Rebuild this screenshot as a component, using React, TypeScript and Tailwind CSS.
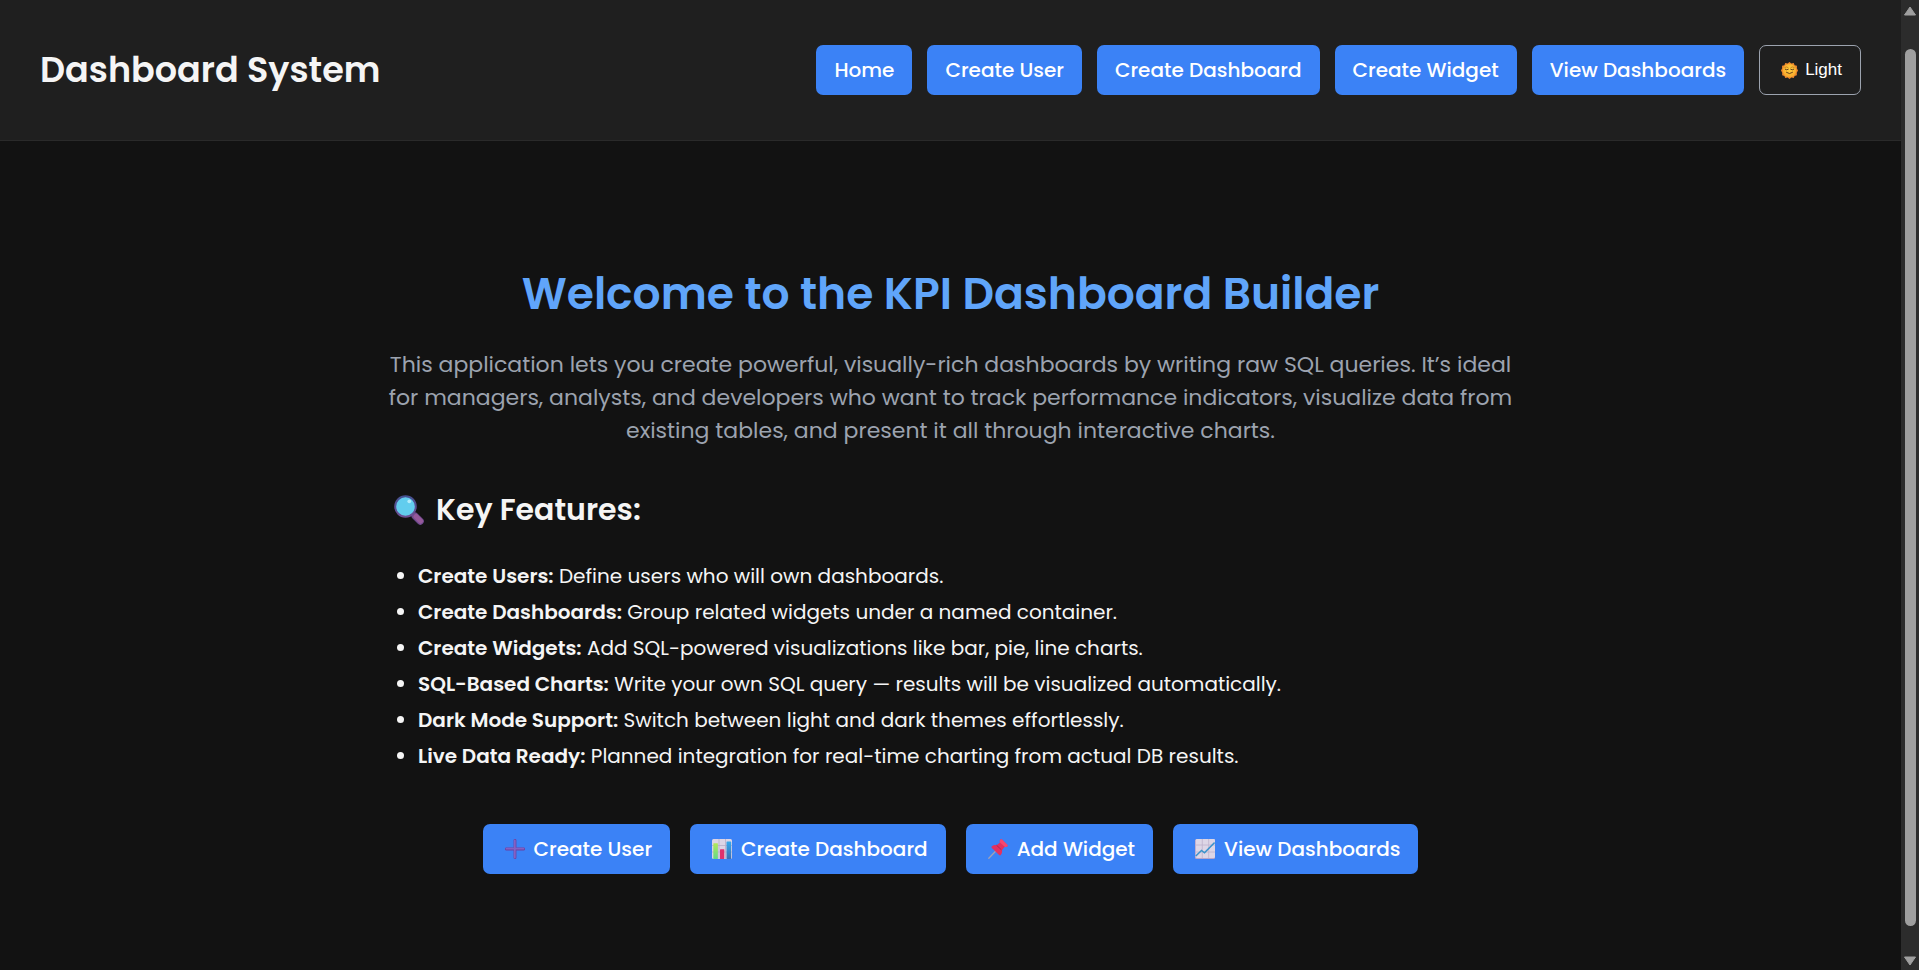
import type { ReactNode } from "react";

function SunFace() {
  return (
    <svg viewBox="0 0 36 36" className="size-[17px] shrink-0" aria-hidden="true">
      <defs>
        <radialGradient id="sun" cx="50%" cy="40%" r="60%">
          <stop offset="0" stopColor="#ffd040" />
          <stop offset="1" stopColor="#f8a82a" />
        </radialGradient>
      </defs>
      <path
        d="M18 0l4 3.4 5-1.4 1.8 4.8 5 1.4-.2 5.1L36 18l-2.6 4.5.2 5.3-4.8 1.6L27 34l-5-1.2L18 36l-4-3.2L9 34l-1.800-4.600-4.800-1.600.2-5.300L0 18l2.400-4.700-.2-5.100 5-1.400L9 2l5 1.400z"
        fill="#ef8a2c"
      />
      <circle cx="18" cy="18" r="14" fill="url(#sun)" />
      <path d="M8 11.500q3.500-2.500 7 0M21 11.500q3.500-2.500 7 0" stroke="#b8741a" strokeWidth="1.600" fill="none" strokeLinecap="round" />
      <path d="M9 15.500q3 2.500 6.500 0M20.500 15.500q3.500 2.500 6.500 0M11.500 22q6.500 5.500 13 0" stroke="#5b3a1d" strokeWidth="2" fill="none" strokeLinecap="round" />
    </svg>
  );
}

function Magnifier() {
  return (
    <svg viewBox="0 0 30 30" className="size-[30px] shrink-0" aria-hidden="true">
      <defs>
        <linearGradient id="rim" x1="0" y1="0" x2="0" y2="1">
          <stop offset="0" stopColor="#44508f" />
          <stop offset="1" stopColor="#6d4f93" />
        </linearGradient>
      </defs>
      <path d="M17.500 17.500l3 3" stroke="#56427c" strokeWidth="3" />
      <path d="M21 21l5.300 5.300" stroke="#6f4a8e" strokeWidth="7" strokeLinecap="round" />
      <path d="M22 21.500l4.500 4.500" stroke="#95599a" strokeWidth="5" strokeLinecap="round" />
      <circle cx="11.500" cy="11.500" r="10.300" fill="#62cdee" stroke="url(#rim)" strokeWidth="2" />
      <circle cx="15.300" cy="6.300" r="1.900" fill="#b3ecfb" />
    </svg>
  );
}

function PlusIcon() {
  return (
    <svg viewBox="0 0 20 20" className="size-5 shrink-0" aria-hidden="true">
      <path d="M10 1.300v17.400M1.300 10h17.400" stroke="#6a3fa3" strokeWidth="2.800" strokeLinecap="round" />
      <path d="M9.800 1.500v17M1.500 9.700h17" stroke="#8461c4" strokeWidth="1.800" strokeLinecap="round" />
    </svg>
  );
}

function BarChartIcon() {
  return (
    <svg viewBox="0 0 20 20" className="size-5 shrink-0" aria-hidden="true">
      <defs>
        <linearGradient id="green" x1="0" y1="0" x2="0" y2="1">
          <stop offset="0" stopColor="#b4e85a" />
          <stop offset="1" stopColor="#62d88a" />
        </linearGradient>
        <linearGradient id="blue" x1="0" y1="0" x2="0" y2="1">
          <stop offset="0" stopColor="#35a9ec" />
          <stop offset="1" stopColor="#3d6fb5" />
        </linearGradient>
      </defs>
      <rect width="20" height="20" rx="1.500" fill="#ddd5e6" />
      <path d="M0 6.500h20M0 13h20M7 0v20M13.500 0v20" stroke="#b9adc8" strokeWidth=".8" />
      <rect x="1.300" y="4.300" width="4.600" height="15.700" rx=".5" fill="url(#green)" />
      <rect x="8" y="10.300" width="4.300" height="9.700" rx=".5" fill="#e0316d" />
      <rect x="14.500" y="2.600" width="4.700" height="17.400" rx=".5" fill="url(#blue)" />
    </svg>
  );
}

function PinIcon() {
  return (
    <svg viewBox="0 0 20 20" className="size-5 shrink-0" aria-hidden="true">
      <path d="M.8 19.200l7.500-7.700" stroke="#a3a0b5" strokeWidth="1.300" strokeLinecap="round" />
      <path d="M12.200.8q.8-1 1.800-.2l5.300 5.100q.9.900-.1 1.700-1.200.8-2.500.3l-2.700 3.500q.6 2.700-1.200 4.800-.8.800-1.700 0L3.900 8.900q-.9-.9 0-1.700 2.100-1.500 4.600-1L12 3.500q-.6-1.500.2-2.700z" fill="#e3315f" />
      <path d="M12.200.8q.8-1 1.800-.2l5.300 5.100q.9.900-.1 1.700-1.200.8-2.500.3l-4.700-4.200q-.6-1.500.2-2.700z" fill="#f5476f" />
      <path d="M8.500 6.200l4.900 4.600" stroke="#b3224f" strokeWidth="1" />
    </svg>
  );
}

function TrendIcon() {
  return (
    <svg viewBox="0 0 20 20" className="size-5 shrink-0" aria-hidden="true">
      <rect width="20" height="20" rx="1.500" fill="#b9a5c9" />
      <rect x=".8" width="19.200" height="19" rx="1.300" fill="#ddd6e6" />
      <path d="M.8 6h19.200M.8 13h19.200M7.300 0v19M13.700 0v19" stroke="#bfb3cc" strokeWidth=".8" />
      <path d="M.8 17l5.700-5.500 3 2.300L19.600 3.500" stroke="#3a93cc" strokeWidth="1.500" fill="none" />
    </svg>
  );
}

const navLinks = ["Home", "Create User", "Create Dashboard", "Create Widget", "View Dashboards"];

const features = [
  ["Create Users:", "Define users who will own dashboards."],
  ["Create Dashboards:", "Group related widgets under a named container."],
  ["Create Widgets:", "Add SQL-powered visualizations like bar, pie, line charts."],
  ["SQL-Based Charts:", "Write your own SQL query — results will be visualized automatically."],
  ["Dark Mode Support:", "Switch between light and dark themes effortlessly."],
  ["Live Data Ready:", "Planned integration for real-time charting from actual DB results."],
];

const actions: { label: string; icon: ReactNode }[] = [
  { label: "Create User", icon: <PlusIcon /> },
  { label: "Create Dashboard", icon: <BarChartIcon /> },
  { label: "Add Widget", icon: <PinIcon /> },
  { label: "View Dashboards", icon: <TrendIcon /> },
];

function Scrollbar() {
  return (
    <div className="flex w-[18px] shrink-0 flex-col items-center bg-[#2c2c2c] py-1" aria-hidden="true">
      <svg viewBox="0 0 14 10" className="mt-[2px] h-[10px] w-[14px]">
        <path d="M7 1l5.500 8h-11z" fill="#9f9f9f" stroke="#9f9f9f" strokeLinejoin="round" />
      </svg>
      <div className="mt-[33px] mb-[30px] w-[11px] grow rounded-full bg-[#9f9f9f]" />
      <svg viewBox="0 0 14 10" className="h-[10px] w-[14px]">
        <path d="M7 9l5.500-8h-11z" fill="#9f9f9f" stroke="#9f9f9f" strokeLinejoin="round" />
      </svg>
    </div>
  );
}

export default function App() {
  return (
    <div className="flex min-h-screen bg-[#121212] font-['Poppins','Inter',sans-serif] text-[#f5f5f5]">
      <div className="min-w-0 grow">
        <header className="flex items-center justify-between border-b border-[#2a2a2a] bg-[#1f1f1f] px-10 py-[45px]">
          <div className="text-[35px] leading-[50px] font-semibold">Dashboard System</div>
          <nav className="flex gap-[15px]">
            {navLinks.map((label) => (
              <a key={label} href="#" className="rounded-[7px] bg-[#3b82f6] px-[18px] text-xl/[50px] font-medium whitespace-nowrap text-white">
                {label}
              </a>
            ))}
            <button type="button" className="flex items-center gap-[7px] rounded-[7px] border border-[#9ca3af] pr-[18px] pl-[21px] font-['Liberation_Sans',sans-serif] text-[17px] text-white">
              <SunFace />
              Light
            </button>
          </nav>
        </header>

        <main className="mx-auto max-w-[1125px] pt-[125px] pb-20">
          <h1 className="text-center text-[44px] leading-[56px] font-semibold text-[#60a5fa]">
            Welcome to the KPI Dashboard Builder
          </h1>
          <p className="mt-[26px] text-center text-[22px] leading-[33px] text-[#9ca3af]">
            This application lets you create powerful, visually-rich dashboards by writing raw SQL queries. It’s ideal
            for managers, analysts, and developers who want to track performance indicators, visualize data from
            existing tables, and present it all through interactive charts.
          </p>
          <h2 className="mt-10 flex items-center gap-3 pl-[6px] text-[30px] leading-[45px] font-semibold">
            <Magnifier />
            Key Features:
          </h2>
          <ul className="mt-[26px] list-disc pl-[30px] text-xl/9">
            {features.map(([name, text]) => (
              <li key={name}>
                <strong className="font-semibold">{name}</strong> {text}
              </li>
            ))}
          </ul>
          <div className="mt-[50px] flex justify-center gap-5">
            {actions.map(({ label, icon }) => (
              <a key={label} href="#" className="flex items-center gap-[9px] rounded-[7px] bg-[#3b82f6] pr-[18px] pl-[22px] text-xl/[50px] font-medium whitespace-nowrap text-white">
                {icon}
                {label}
              </a>
            ))}
          </div>
        </main>
      </div>
      <Scrollbar />
    </div>
  );
}
